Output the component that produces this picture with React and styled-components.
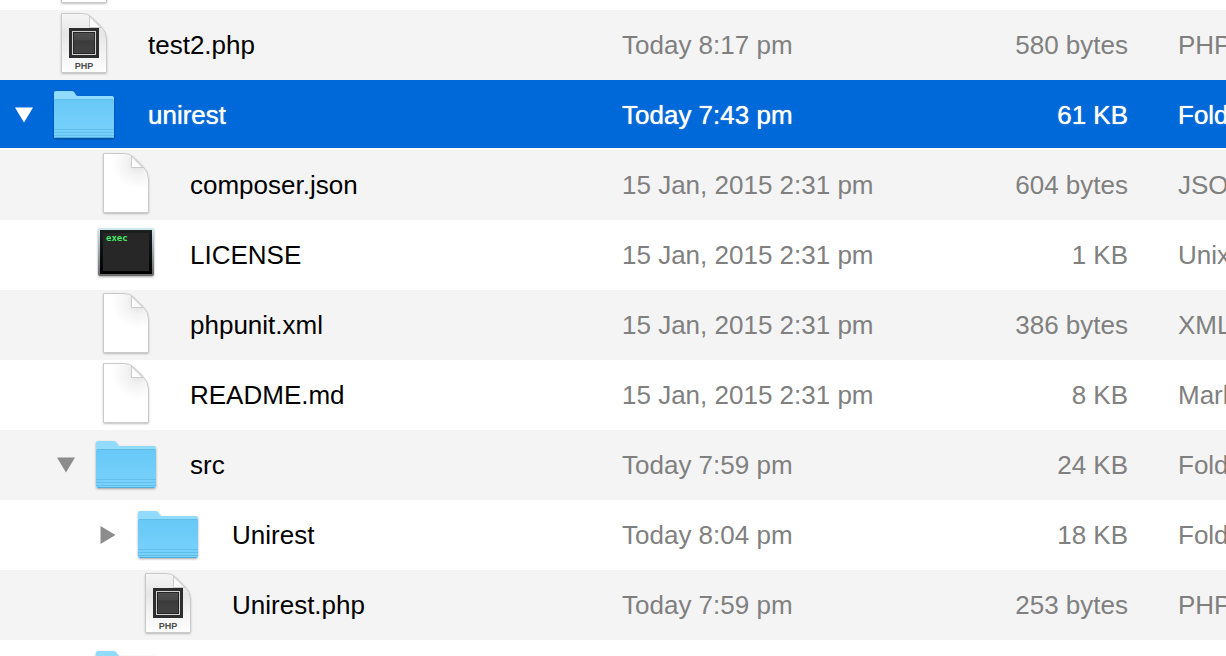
import React, { useState } from "react";
import styled, { createGlobalStyle, css } from "styled-components";

const GlobalStyle = createGlobalStyle`
  * { box-sizing: border-box; }
  html, body { margin: 0; background: #fff; overflow: hidden; }
`;

const Viewport = styled.main`
  height: 100vh;
  overflow: hidden;
  background: #fff;
  font-family: "Liberation Sans", Arial, sans-serif;
`;

/* The list is scrolled part of the way through its first row. */
const Table = styled.table`
  width: 100%;
  margin-top: -60px;
  table-layout: fixed;
  border-collapse: collapse;
`;

const Col = styled.col`
  width: ${(p) => p.$width};
`;

const Cell = styled.td`
  height: 70px;
  padding: 0;
  overflow: hidden;
  white-space: nowrap;
  font-size: 26px;
  line-height: 30px;
  color: #808080;
  text-align: ${(p) => p.$align || "left"};
`;

const KindCell = styled(Cell)`
  padding-left: 50px;
`;

const Row = styled.tr`
  background: ${(p) => (p.$striped ? "#f4f4f4" : "#fff")};
  ${(p) =>
    p.$selected &&
    css`
      background: linear-gradient(#0069d9 0 68px, #fff 68px);
      ${Cell}, ${KindCell} {
        color: #fff;
        text-shadow: 0 0 1px #fff;
      }
    `}
`;

const NameLayout = styled.div`
  display: flex;
  align-items: center;
  height: 70px;
  padding-left: ${(p) => p.$level * 42}px;
`;

const ToggleSlot = styled.div`
  display: flex;
  justify-content: center;
  flex: 0 0 48px;
`;

const Toggle = styled.button`
  display: flex;
  padding: 0;
  border: 0;
  background: none;
  color: ${(p) => (p.$selected ? "#fff" : "#8c8c8c")};
`;

const IconArt = styled.svg`
  display: block;
  flex: 0 0 72px;
  width: 72px;
  height: 70px;
`;

const FileName = styled.span`
  padding-left: 28px;
  color: ${(p) => (p.$selected ? "#fff" : "#000")};
`;

const SharedDefs = styled.svg`
  display: block;
  width: 0;
  height: 0;
`;

function Defs() {
  return (
    <SharedDefs aria-hidden="true">
      <defs>
        <linearGradient id="folderBody" x1="0" y1="0" x2="0" y2="1">
          <stop offset="0" stopColor="#67c8f7" />
          <stop offset="1" stopColor="#7ad2fc" />
        </linearGradient>
        <radialGradient id="pageShade" gradientUnits="userSpaceOnUse" cx="48" cy="13" r="26">
          <stop offset="0" stopColor="#dedede" />
          <stop offset="0.45" stopColor="#f3f3f3" />
          <stop offset="1" stopColor="#fff" />
        </radialGradient>
        <linearGradient id="phpShade" x1="0" y1="0" x2="0" y2="1">
          <stop offset="0" stopColor="#f5f5f5" />
          <stop offset="0.35" stopColor="#e6e6e6" />
          <stop offset="1" stopColor="#fff" />
        </linearGradient>
        <linearGradient id="foldShade" x1="0" y1="1" x2="1" y2="0">
          <stop offset="0" stopColor="#fff" />
          <stop offset="0.35" stopColor="#fff" />
          <stop offset="0.65" stopColor="#dedede" />
        </linearGradient>
        <linearGradient id="badge" x1="0" y1="0" x2="0" y2="1">
          <stop offset="0" stopColor="#505050" />
          <stop offset="0.35" stopColor="#484848" />
          <stop offset="0.4" stopColor="#3b3b3b" />
          <stop offset="1" stopColor="#434343" />
        </linearGradient>
        <linearGradient id="execFrame" x1="0" y1="0" x2="0" y2="1">
          <stop offset="0" stopColor="#d3eaf1" />
          <stop offset="0.5" stopColor="#9ba5a9" />
          <stop offset="1" stopColor="#6a6a6a" />
        </linearGradient>
        <linearGradient id="execBezel" x1="0" y1="0" x2="0" y2="1">
          <stop offset="0" stopColor="#1c1f1f" />
          <stop offset="1" stopColor="#000" />
        </linearGradient>
        <filter id="shadow" x="-20%" y="-20%" width="140%" height="140%">
          <feDropShadow dx="0" dy="1" stdDeviation="1" floodColor="#000" floodOpacity="0.35" />
        </filter>
      </defs>
    </SharedDefs>
  );
}

function FolderIcon() {
  return (
    <IconArt viewBox="0 0 72 70" aria-hidden="true">
      <g filter="url(#shadow)">
        <path d="M8 11H24Q25.500 11 26.500 12.500L28 15Q28.700 16 30 16H64Q66 16 66 18V55.500Q66 58 63.500 58H8.500Q6 58 6 55.500V13Q6 11 8 11Z" fill="#91dbff" />
      </g>
      <path d="M8 19H64Q66 19 66 21V55.500Q66 58 63.500 58H8.500Q6 58 6 55.500V21Q6 19 8 19Z" fill="url(#folderBody)" />
      <path d="M7 19.500H65" stroke="#60bce8" strokeWidth="1" />
      <path d="M6 49.500H66M6 52.500H66M6 55.500H66" stroke="#62bfea" strokeWidth="1" />
      <path d="M7.500 57.500H64.500" stroke="#4fafdc" strokeWidth="1" />
    </IconArt>
  );
}

const PAGE = "M13.500 3.500H34Q40 3.500 43.500 7L53 16.500Q58.500 22 58.500 29V62.500H13.500Z";

function PageIcon({ php }) {
  return (
    <IconArt viewBox="0 0 72 70" aria-hidden="true">
      <path d={PAGE} fill="#fff" filter="url(#shadow)" />
      <path d={PAGE} fill={php ? "url(#phpShade)" : "url(#pageShade)"} stroke="#cacaca" strokeWidth="1" />
      <path d="M41.500 6V17.500H53Z" fill="url(#foldShade)" stroke="#cbcbcb" strokeWidth="1" />
      {php && (
        <>
          <rect x="21" y="18" width="30" height="30" fill="#2d2d2d" />
          <rect x="24.500" y="21.500" width="23" height="23" fill="url(#badge)" stroke="#d0d0d0" strokeWidth="1" />
          <rect x="25.500" y="22.500" width="21" height="21" fill="none" stroke="#252525" strokeWidth="1" />
          <text x="36" y="59" textAnchor="middle" fontFamily="Liberation Sans, Arial, sans-serif" fontSize="9" fontWeight="700" fill="#4c4c4c">
            PHP
          </text>
        </>
      )}
    </IconArt>
  );
}

function ExecIcon() {
  return (
    <IconArt viewBox="0 0 72 70" aria-hidden="true">
      <rect x="8" y="8" width="56" height="48" rx="2" fill="url(#execFrame)" filter="url(#shadow)" />
      <rect x="10" y="10" width="52" height="44" fill="url(#execBezel)" />
      <rect x="13" y="13" width="46" height="38" fill="#272727" />
      <text x="16" y="21" fontFamily="DejaVu Sans Mono, monospace" fontSize="9" fontWeight="700" fill="#43ec67">
        exec
      </text>
    </IconArt>
  );
}

function FileIcon({ type }) {
  if (type === "folder") return <FolderIcon />;
  if (type === "exec") return <ExecIcon />;
  return <PageIcon php={type === "php"} />;
}

function Disclosure({ open, selected, name, onClick }) {
  return (
    <Toggle type="button" aria-expanded={open} aria-label={name} $selected={selected} onClick={onClick}>
      {open ? (
        <svg width="18" height="16" viewBox="0 0 18 16">
          <path d="M0 0.500H18L9 15.500Z" fill="currentColor" />
        </svg>
      ) : (
        <svg width="16" height="18" viewBox="0 0 16 18">
          <path d="M0.500 0L15.500 9L0.500 18Z" fill="currentColor" />
        </svg>
      )}
    </Toggle>
  );
}

const files = [
  { level: 0, type: "page" },
  { level: 0, type: "php", name: "test2.php", date: "Today 8:17 pm", size: "580 bytes", kind: "PHP" },
  { level: 0, type: "folder", open: true, selected: true, name: "unirest", date: "Today 7:43 pm", size: "61 KB", kind: "Folder" },
  { level: 1, type: "page", name: "composer.json", date: "15 Jan, 2015 2:31 pm", size: "604 bytes", kind: "JSON" },
  { level: 1, type: "exec", name: "LICENSE", date: "15 Jan, 2015 2:31 pm", size: "1 KB", kind: "Unix" },
  { level: 1, type: "page", name: "phpunit.xml", date: "15 Jan, 2015 2:31 pm", size: "386 bytes", kind: "XML" },
  { level: 1, type: "page", name: "README.md", date: "15 Jan, 2015 2:31 pm", size: "8 KB", kind: "Markdown" },
  { level: 1, type: "folder", open: true, name: "src", date: "Today 7:59 pm", size: "24 KB", kind: "Folder" },
  { level: 2, type: "folder", open: false, name: "Unirest", date: "Today 8:04 pm", size: "18 KB", kind: "Folder" },
  { level: 2, type: "php", name: "Unirest.php", date: "Today 7:59 pm", size: "253 bytes", kind: "PHP" },
  { level: 1, type: "folder" },
];

export default function App() {
  const [toggled, setToggled] = useState({});
  return (
    <Viewport>
      <GlobalStyle />
      <Defs />
      <Table>
        <colgroup>
          <Col $width="auto" />
          <Col $width="338px" />
          <Col $width="168px" />
          <Col $width="98px" />
        </colgroup>
        <tbody>
          {files.map((f, i) => (
            <Row key={i} $striped={i % 2 === 1} $selected={f.selected}>
              <Cell>
                <NameLayout $level={f.level}>
                  <ToggleSlot>
                    {f.name && f.type === "folder" && (
                      <Disclosure
                        open={toggled[i] ? !f.open : f.open}
                        selected={f.selected}
                        name={f.name}
                        onClick={() => setToggled({ ...toggled, [i]: !toggled[i] })}
                      />
                    )}
                  </ToggleSlot>
                  <FileIcon type={f.type} />
                  <FileName $selected={f.selected}>{f.name}</FileName>
                </NameLayout>
              </Cell>
              <Cell>{f.date}</Cell>
              <Cell $align="right">{f.size}</Cell>
              <KindCell>{f.kind}</KindCell>
            </Row>
          ))}
        </tbody>
      </Table>
    </Viewport>
  );
}
